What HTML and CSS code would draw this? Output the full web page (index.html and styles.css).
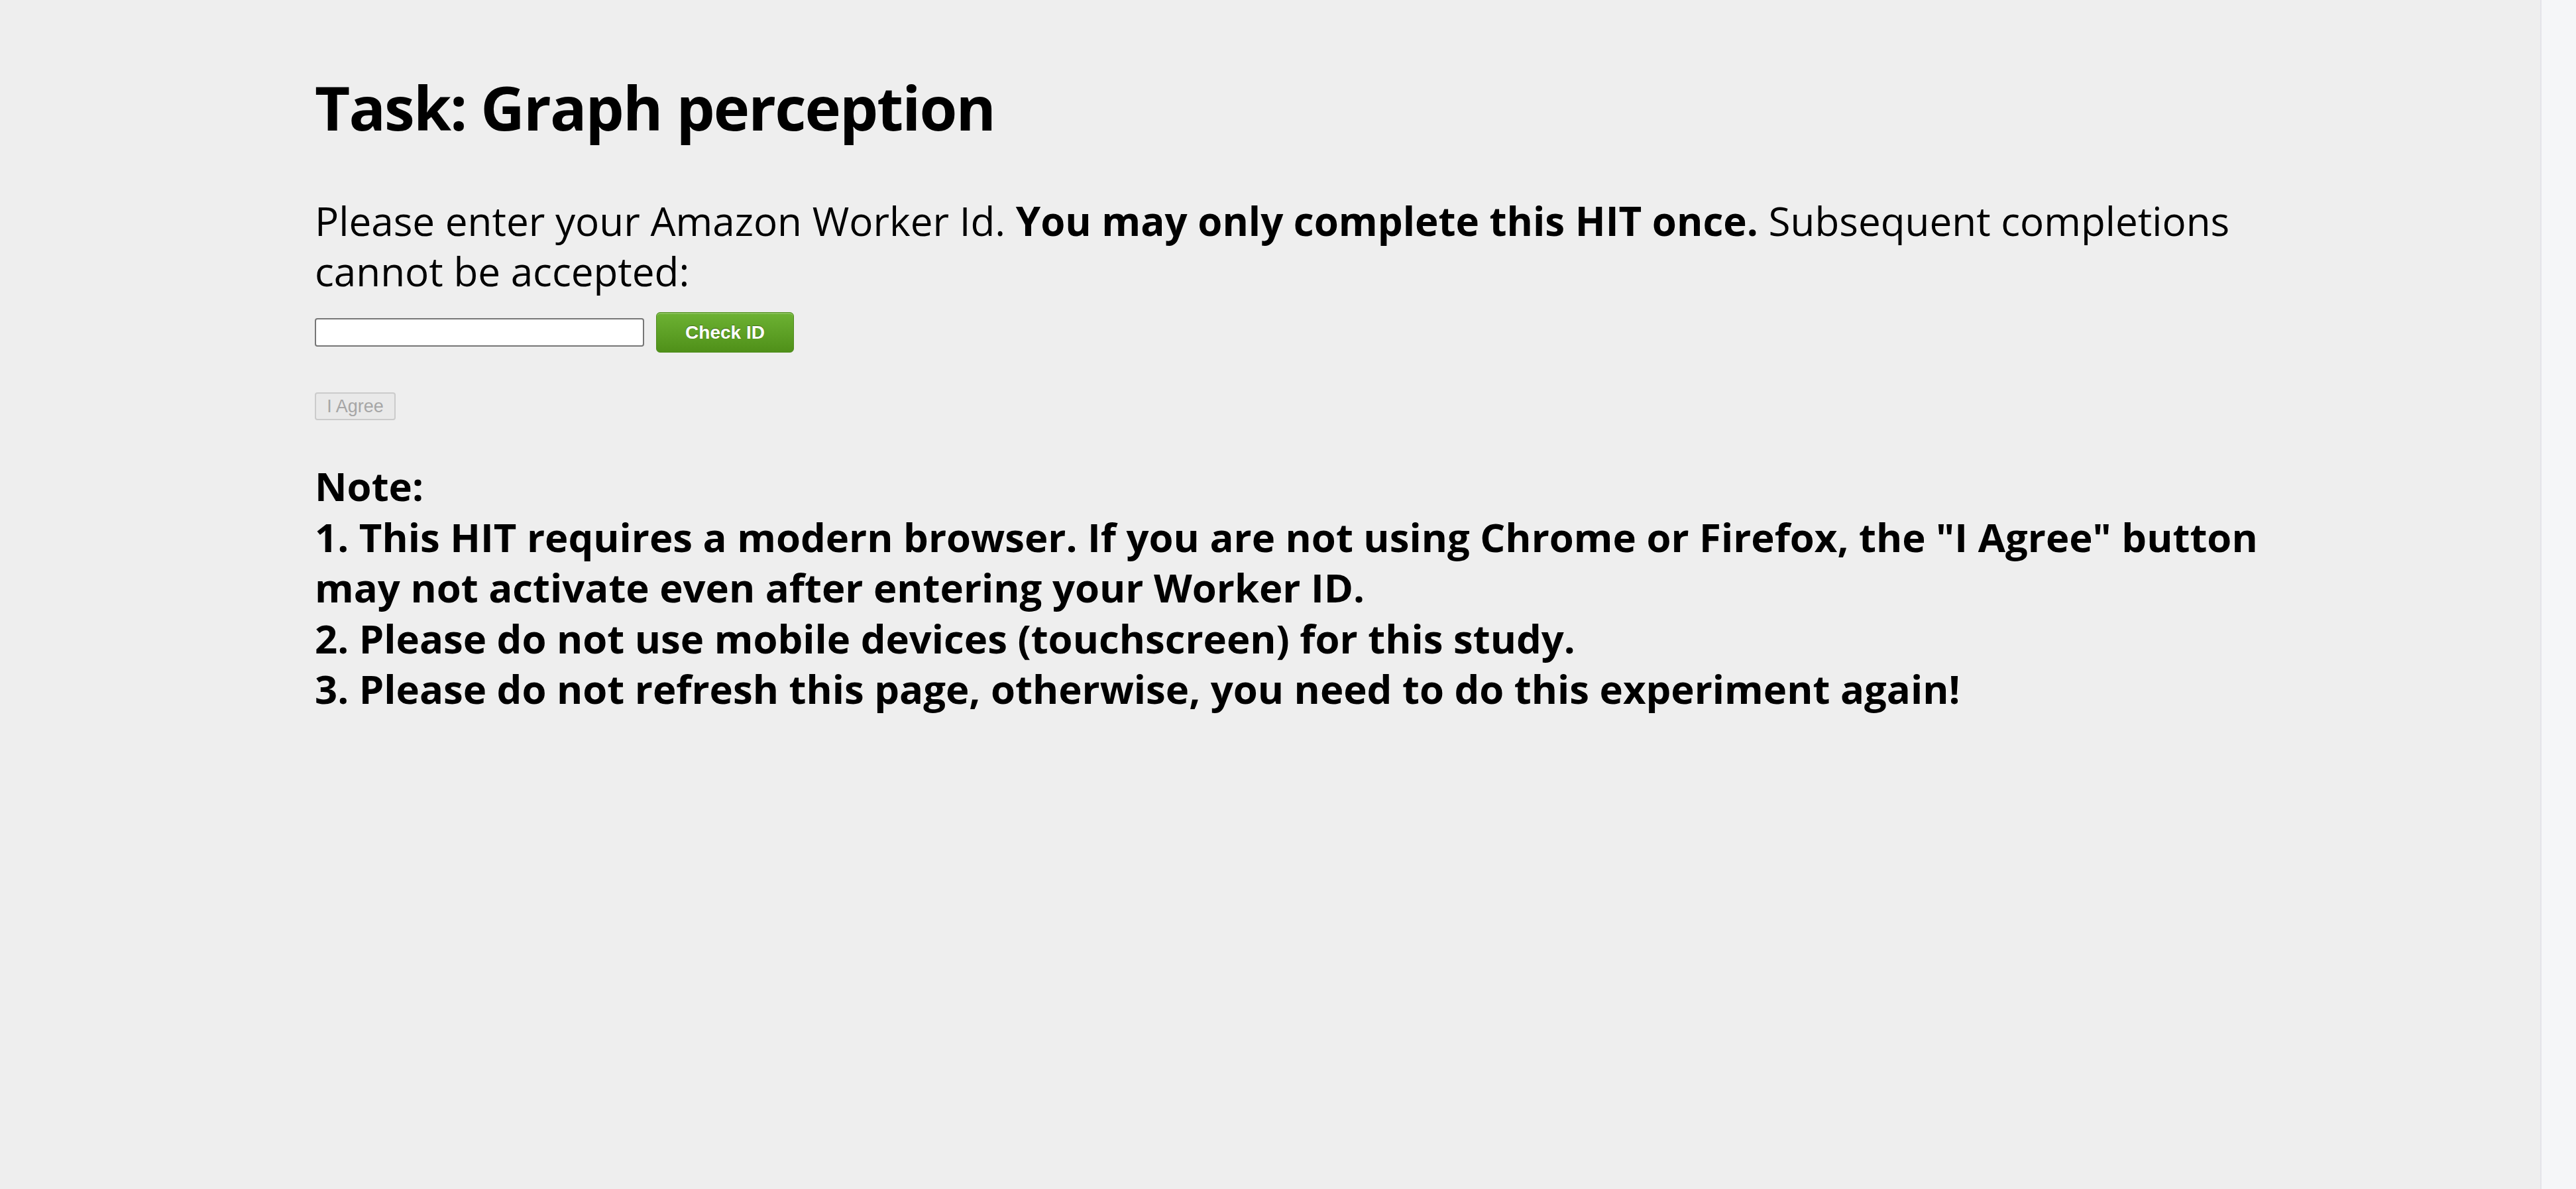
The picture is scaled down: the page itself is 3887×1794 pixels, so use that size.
FILE: index.html
```html
<!DOCTYPE html>
<html lang="en">
<head>
<meta charset="utf-8">
<title>Task: Graph perception</title>
<link rel="stylesheet" href="styles.css">
</head>
<body>
<div class="page">
  <main class="content">
    <h1 class="title">Task: Graph perception</h1>
    <p class="intro">Please enter your Amazon Worker Id. <b>You may only complete this HIT once.</b> Subsequent completions cannot be accepted:</p>
    <div class="id-row">
      <input class="id-input" type="text">
      <button class="check-btn" type="button">Check ID</button>
    </div>
    <div class="agree-row">
      <button class="agree-btn" type="button" disabled>I Agree</button>
    </div>
    <div class="note">
      <div>Note:</div>
      <div>1. This HIT requires a modern browser. If you are not using Chrome or Firefox, the "I Agree" button may not activate even after entering your Worker ID.</div>
      <div>2. Please do not use mobile devices (touchscreen) for this study.</div>
      <div>3. Please do not refresh this page, otherwise, you need to do this experiment again!</div>
    </div>
  </main>
  <div class="scroll-track"></div>
</div>
</body>
</html>
```

FILE: styles.css
```css
html, body {
  margin: 0;
  padding: 0;
  background: #eeeeee;
}
body {
  font-family: "Open Sans", "Noto Sans", sans-serif;
  color: #000;
}
.page {
  display: flex;
  height: 100vh;
  overflow: hidden;
}
.content {
  flex: 1;
  padding: 104px 0 0 475px;
  box-sizing: border-box;
}
.content > * {
  max-width: 2990px;
}
.title {
  margin: 0;
  font-size: 92px;
  line-height: 116px;
  font-weight: 700;
  letter-spacing: -1.9px;
}
.intro {
  margin: 75px 0 0 0;
  font-size: 60.2px;
  line-height: 76px;
}
.intro b {
  font-weight: 700;
  font-size: 60px;
}
.id-row {
  display: flex;
  align-items: center;
  gap: 18px;
  margin-top: 24px;
}
.id-input {
  width: 497px;
  height: 43px;
  box-sizing: border-box;
  margin: 0;
  border: 2px solid #767676;
  border-radius: 4px;
  background: #fff;
}
.check-btn {
  width: 208px;
  height: 61px;
  box-sizing: border-box;
  margin: 0;
  padding: 0;
  border: 1px solid #4f8c1c;
  border-radius: 6px;
  background: linear-gradient(#6db233, #4f9019);
  box-shadow: inset 0 2px 0 rgba(255,255,255,0.18);
  color: #fff;
  font-family: "Liberation Sans", Arial, sans-serif;
  font-weight: 700;
  font-size: 28px;
  text-shadow: 0 -1px 1px rgba(0,0,0,0.35);
}
.agree-row {
  margin-top: 60px;
  display: flex;
}
.agree-btn {
  width: 122px;
  height: 42px;
  box-sizing: border-box;
  margin: 0;
  padding: 0;
  border: 2px solid #cbcbcb;
  border-radius: 4px;
  background: #e9e9e9;
  color: #a6a6a6;
  font-family: "Liberation Sans", Arial, sans-serif;
  font-size: 27px;
}
.note {
  margin-top: 61px;
  font-size: 59.8px;
  line-height: 76.5px;
  font-weight: 700;
}
.scroll-track {
  width: 52px;
  flex: none;
  border-left: 2px solid #e4e4ea;
  background: #f5f6f8;
}
```
